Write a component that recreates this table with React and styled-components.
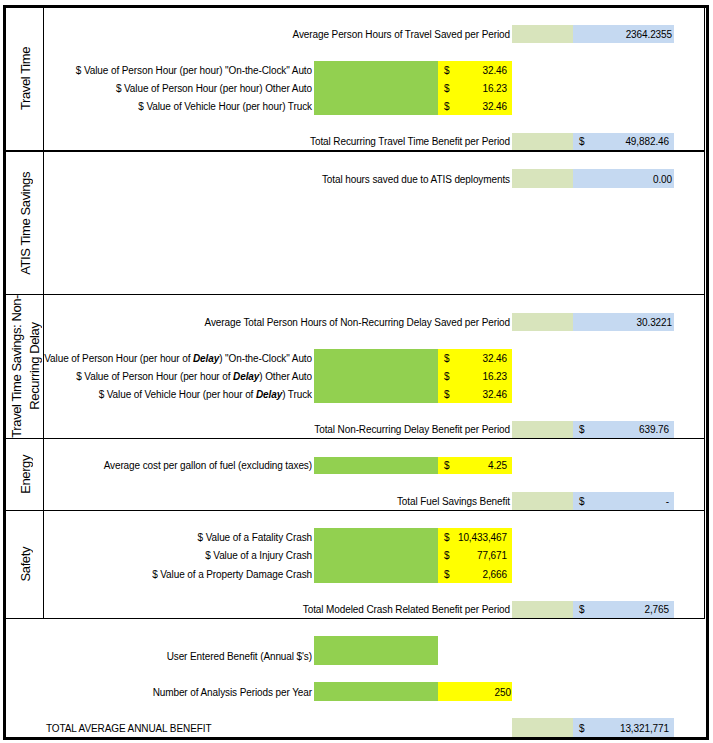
import React from 'react';
import styled, { createGlobalStyle } from 'styled-components';

const GlobalStyle = createGlobalStyle`
    html, body {
        margin: 0;
        padding: 0;
        background: #fff;
    }
    body {
        font-family: "Liberation Sans", Arial, sans-serif;
        color: #000;
    }
`;

const Frame = styled.div`
    box-sizing: border-box;
    width: 706px;
    margin: 5px 0 0 3px;
    border: 3px solid #000;
`;

const Upper = styled.div`
    margin-right: 1px;
    border-right: 1px solid #000;
`;

const Section = styled.div`
    display: flex;
    border-bottom: ${p => (p.$last ? 'none' : `${p.$thick ? 2 : 1}px solid #000`)};
`;

const LabelCol = styled.div`
    width: 38px;
    flex-shrink: 0;
    border-right: 1px solid ${p => (p.$empty ? 'transparent' : '#000')};
    display: flex;
    align-items: center;
    justify-content: center;
    padding-left: 3px;
    box-sizing: border-box;
`;

const VerticalText = styled.div`
    writing-mode: vertical-rl;
    transform: rotate(180deg);
    font-size: 13px;
    line-height: 18px;
    letter-spacing: -0.4px;
    white-space: nowrap;
    text-align: center;
`;

const Content = styled.div`
    flex: 1;
    min-width: 0;
    overflow: hidden;
`;

const Spacer = styled.div`
    height: ${p => p.$h}px;
`;

const Row = styled.div`
    display: grid;
    grid-template-columns: 270px 124px 74px 61px 101px 1fr;
    height: ${p => p.$h}px;
    font-size: 10px;
    line-height: 12px;
    letter-spacing: -0.1px;
`;

const Cell = styled.div`
    display: flex;
    align-items: flex-end;
    padding-bottom: 2px;
    box-sizing: border-box;
    min-width: 0;
    overflow: hidden;
    white-space: nowrap;
`;

const LabelCell = styled(Cell)`
    grid-column: ${p => (p.$wide ? '1 / 4' : '1 / 2')};
    justify-content: ${p => (p.$left ? 'flex-start' : 'flex-end')};
    padding-left: ${p => (p.$left ? '2px' : '0')};
    padding-right: ${p => (p.$left ? '0' : '2px')};

    span {
        flex-shrink: 0;
    }
    em {
        font-weight: bold;
    }
`;

const GreenCell = styled(Cell)`
    grid-column: 2 / 3;
    background: #92d050;
`;

const PaleCell = styled(Cell)`
    grid-column: 4 / 5;
    background: #d8e4bc;
`;

const MoneyCell = styled(Cell)`
    grid-column: ${p => p.$col};
    background: ${p => p.$bg};
    justify-content: space-between;
    padding-left: 6px;
    padding-right: ${p => p.$pr}px;
`;

const InputRow = ({ h = 18, label, value, dollar = true, noYellow }) => (
    <Row $h={h}>
        <LabelCell><span>{label}</span></LabelCell>
        <GreenCell />
        {!noYellow && (
            <MoneyCell $col="3 / 4" $bg="#ffff00" $pr={dollar ? 5 : 1}>
                <span>{dollar ? '$' : ''}</span>
                <span>{value}</span>
            </MoneyCell>
        )}
    </Row>
);

const SummaryRow = ({ h = 18, label, value, dollar, left }) => (
    <Row $h={h}>
        <LabelCell $wide $left={left}><span>{label}</span></LabelCell>
        <PaleCell />
        <MoneyCell $col="5 / 6" $bg="#c5d9f1" $pr={dollar ? 5 : 2}>
            <span>{dollar ? '$' : ''}</span>
            <span>{value}</span>
        </MoneyCell>
    </Row>
);

const App = () => {
    return (
        <>
            <GlobalStyle />
            <Frame>
                <Upper>
                    <Section $thick>
                        <LabelCol>
                            <VerticalText>Travel Time</VerticalText>
                        </LabelCol>
                        <Content>
                            <Spacer $h={17} />
                            <SummaryRow label="Average Person Hours of Travel Saved per Period" value="2364.2355" />
                            <Spacer $h={18} />
                            <InputRow label={'$ Value of Person Hour (per hour) "On-the-Clock" Auto'} value="32.46" />
                            <InputRow label="$ Value of Person Hour (per hour) Other Auto" value="16.23" />
                            <InputRow label="$ Value of Vehicle Hour (per hour) Truck" value="32.46" />
                            <Spacer $h={18} />
                            <SummaryRow h={17} label="Total Recurring Travel Time Benefit per Period" value="49,882.46" dollar />
                        </Content>
                    </Section>

                    <Section>
                        <LabelCol>
                            <VerticalText>ATIS Time Savings</VerticalText>
                        </LabelCol>
                        <Content>
                            <Spacer $h={17} />
                            <SummaryRow h={19} label="Total hours saved due to ATIS deployments" value="0.00" />
                            <Spacer $h={106} />
                        </Content>
                    </Section>

                    <Section>
                        <LabelCol>
                            <VerticalText>Travel Time Savings: Non-<br />Recurring Delay</VerticalText>
                        </LabelCol>
                        <Content>
                            <Spacer $h={18} />
                            <SummaryRow label="Average Total Person Hours of Non-Recurring Delay Saved per Period" value="30.3221" />
                            <Spacer $h={18} />
                            <InputRow label={<>$ Value of Person Hour (per hour of <em>Delay</em>) "On-the-Clock" Auto</>} value="32.46" />
                            <InputRow label={<>$ Value of Person Hour (per hour of <em>Delay</em>) Other Auto</>} value="16.23" />
                            <InputRow label={<>$ Value of Vehicle Hour (per hour of <em>Delay</em>) Truck</>} value="32.46" />
                            <Spacer $h={18} />
                            <SummaryRow h={17} label="Total Non-Recurring Delay Benefit per Period" value="639.76" dollar />
                        </Content>
                    </Section>

                    <Section>
                        <LabelCol>
                            <VerticalText>Energy</VerticalText>
                        </LabelCol>
                        <Content>
                            <Spacer $h={18} />
                            <InputRow h={17} label="Average cost per gallon of fuel (excluding taxes)" value="4.25" />
                            <Spacer $h={18} />
                            <SummaryRow label="Total Fuel Savings Benefit" value="-  " dollar />
                        </Content>
                    </Section>

                    <Section>
                        <LabelCol>
                            <VerticalText>Safety</VerticalText>
                        </LabelCol>
                        <Content>
                            <Spacer $h={17} />
                            <InputRow label="$ Value of a Fatality Crash" value="10,433,467" />
                            <InputRow label="$ Value of a Injury Crash" value="77,671" />
                            <InputRow h={19} label="$ Value of a Property Damage Crash" value="2,666" />
                            <Spacer $h={18} />
                            <SummaryRow h={17} label="Total Modeled Crash Related Benefit per Period" value="2,765" dollar />
                        </Content>
                    </Section>
                </Upper>

                <Section $last>
                    <LabelCol $empty />
                    <Content>
                        <Spacer $h={17} />
                        <InputRow h={29} label="User Entered Benefit (Annual $'s)" noYellow />
                        <Spacer $h={17} />
                        <InputRow h={19} label="Number of Analysis Periods per Year" value="250" dollar={false} />
                        <Spacer $h={17} />
                        <SummaryRow h={19} label="TOTAL AVERAGE ANNUAL BENEFIT" value="13,321,771" dollar left />
                    </Content>
                </Section>
            </Frame>
        </>
    );
};

export default App;
